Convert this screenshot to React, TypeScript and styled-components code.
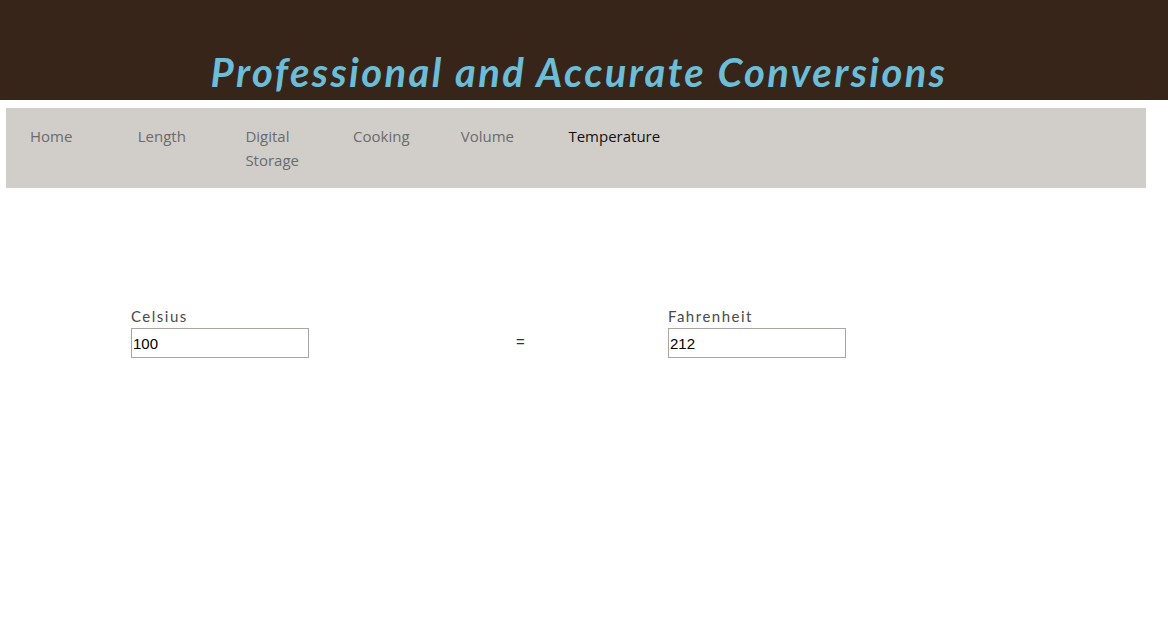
import React from "react";
import styled, { createGlobalStyle } from "styled-components";

const Global = createGlobalStyle`
  html, body { margin: 0; padding: 0; background: #ffffff; }
  body { font-family: "Open Sans", sans-serif; }
`;

const Header = styled.header`
  background: #37251a;
  height: 100px;
  display: flex;
  align-items: flex-end;
  justify-content: center;
`;

const Title = styled.h1`
  margin: 0 10px 4px 0;
  font-family: "Lato", sans-serif;
  font-style: italic;
  font-weight: 700;
  font-size: 40px;
  line-height: 48px;
  letter-spacing: 2.4px;
  color: #6bbdd8;
`;

const Nav = styled.nav`
  margin: 8px 22px 0 6px;
  height: 80px;
  box-sizing: border-box;
  background: #d1ceca;
  padding: 16px 0 0 24px;
`;

const NavList = styled.ul`
  list-style: none;
  margin: 0;
  padding: 0;
  display: flex;
`;

const NavItem = styled.li<{ $active?: boolean }>`
  width: 84px;
  margin-right: 23.7px;
  font-family: "Open Sans", sans-serif;
  font-size: 15px;
  line-height: 24px;
  color: ${(p) => (p.$active ? "#111111" : "#6b6b6b")};
`;

const Converter = styled.section`
  display: grid;
  grid-template-columns: 385px 152px 180px;
  align-items: end;
  margin-top: 118px;
  padding-left: 131px;
`;

const Field = styled.div`
  display: flex;
  flex-direction: column;
`;

const Label = styled.label`
  font-family: "Lato", sans-serif;
  font-size: 15px;
  line-height: 20px;
  letter-spacing: 1.5px;
  color: #4a4a4a;
  margin-bottom: 2px;
`;

const Input = styled.input`
  box-sizing: border-box;
  width: 178px;
  height: 30px;
  border: 1px solid #a9a6a3;
  padding: 0 1px;
  margin: 0;
  font-family: "Liberation Sans", Arial, sans-serif;
  font-size: 15px;
  color: #000000;
  outline: none;
`;

const Equals = styled.div`
  font-family: "Liberation Sans", Arial, sans-serif;
  font-size: 15px;
  line-height: 30px;
  color: #333;
  padding-bottom: 1px;
`;

const items = ["Home", "Length", "Digital Storage", "Cooking", "Volume", "Temperature"];

export default function App() {
  return (
    <>
      <Global />
      <Header>
        <Title>Professional and Accurate Conversions</Title>
      </Header>
      <Nav>
        <NavList>
          {items.map((i) => (
            <NavItem key={i} $active={i === "Temperature"}>
              {i}
            </NavItem>
          ))}
        </NavList>
      </Nav>
      <Converter>
        <Field>
          <Label>Celsius</Label>
          <Input defaultValue="100" />
        </Field>
        <Equals>=</Equals>
        <Field>
          <Label>Fahrenheit</Label>
          <Input defaultValue="212" />
        </Field>
      </Converter>
    </>
  );
}
